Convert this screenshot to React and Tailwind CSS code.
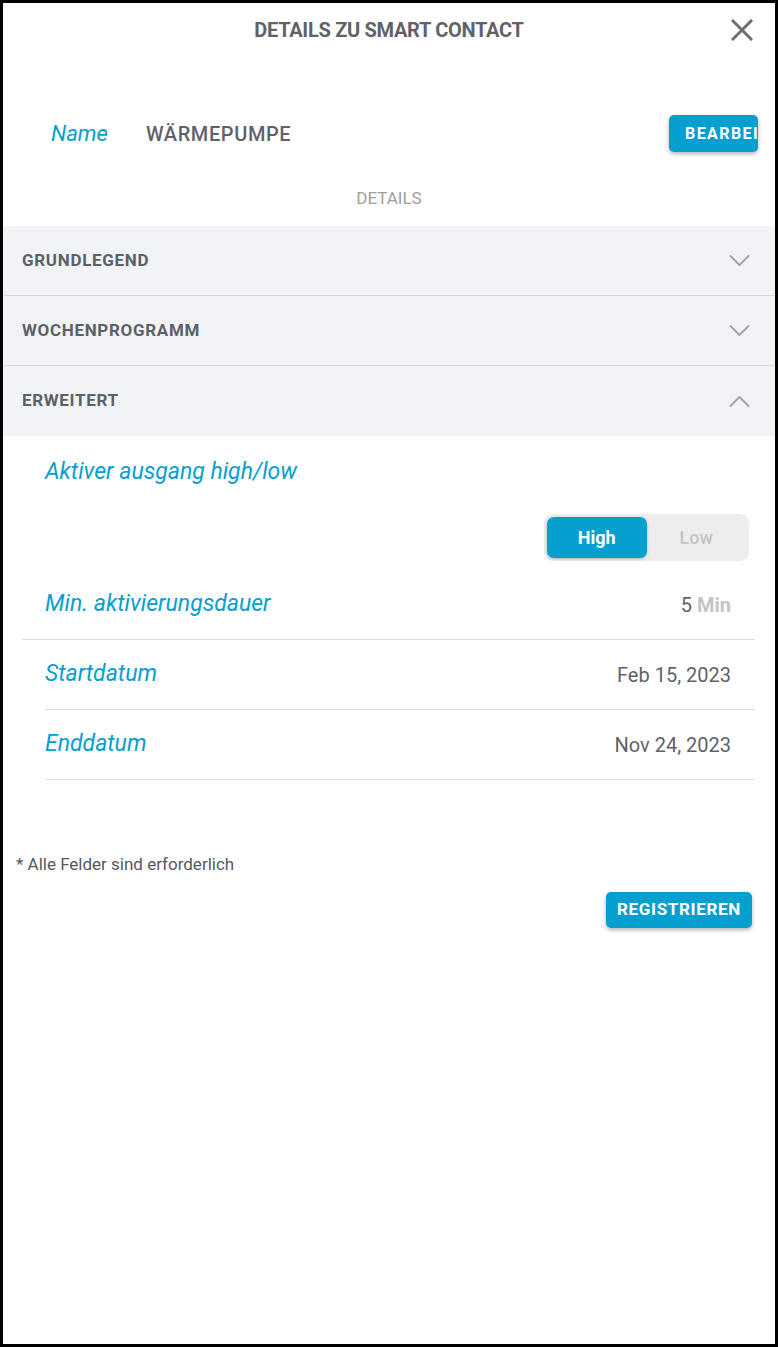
import { useState } from 'react'

function Chevron({ up }) {
  return (
    <svg width="21" height="12" viewBox="0 0 21 12" fill="none" className="text-[#a0a2a5]">
      <path
        d={up ? 'M1.5 11 L10.5 2 L19.5 11' : 'M1.5 1 L10.5 10 L19.5 1'}
        stroke="currentColor"
        strokeWidth="1.8"
        strokeLinecap="round"
        strokeLinejoin="round"
      />
    </svg>
  )
}

function AccordionRow({ title, open, last }) {
  return (
    <div
      className={`flex h-[70px] items-center justify-between bg-[#f2f3f6] pl-[19px] pr-[25px] ${
        last ? '' : 'border-b border-[#d6d8db]'
      }`}
    >
      <span className="text-[17px] font-bold uppercase tracking-[0.04em] text-[#5c6166]">{title}</span>
      <Chevron up={open} />
    </div>
  )
}

function FieldRow({ label, children, first }) {
  return (
    <div
      className={`flex h-[70px] items-center justify-between border-b border-[#dcdcdc] pr-[24px] ${
        first ? 'pl-[23px]' : 'ml-[23px]'
      }`}
    >
      <span className="text-[23px] italic text-[#05a0cf]">{label}</span>
      <span className="text-[20px] text-[#5f6368]">{children}</span>
    </div>
  )
}

export default function App() {
  const [level, setLevel] = useState('high')

  return (
    <div className="box-border h-[1347px] w-[778px] border-[3px] border-black bg-white font-['Roboto',sans-serif]">
      <header className="relative flex h-[54px] items-center justify-center">
        <h1 className="text-[20px] font-bold uppercase tracking-[-0.015em] text-[#5f6368]">
          Details zu Smart Contact
        </h1>
        <button className="absolute right-[22px] top-[16px] text-[#6d7074]" aria-label="Schließen">
          <svg width="22" height="22" viewBox="0 0 22 22">
            <path d="M2 2 L20 20 M20 2 L2 20" stroke="currentColor" strokeWidth="3" strokeLinecap="square" />
          </svg>
        </button>
      </header>

      <div className="mt-[58px] flex h-[37px] items-center pl-[48px] pr-[17px]">
        <span className="w-[95px] text-[22px] italic text-[#05a0cf]">Name</span>
        <span className="text-[20px] font-medium uppercase tracking-[0.03em] text-[#5f6368]">Wärmepumpe</span>
        <button className="ml-auto h-[37px] w-[89px] overflow-hidden whitespace-nowrap rounded-[5px] bg-[#05a0cf] pl-[16px] text-left text-[16px] font-bold uppercase tracking-[0.09em] text-white shadow-[0_2px_4px_rgba(0,0,0,0.3)]">
          Bearbeiten
        </button>
      </div>

      <p className="mt-[35px] text-center text-[17px] uppercase leading-[22px] text-[#9e9e9e]">Details</p>

      <div className="mt-[17px]">
        <AccordionRow title="Grundlegend" />
        <AccordionRow title="Wochenprogramm" />
        <AccordionRow title="Erweitert" open last />
      </div>

      <p className="mt-[21px] pl-[42px] text-[23px] italic leading-[30px] text-[#05a0cf]">Aktiver ausgang high/low</p>

      <div className="mt-[27px] flex justify-end pr-[26px]">
        <div className="flex h-[47px] w-[205px] rounded-[9px] bg-[#ededed] p-[3px]">
          <button
            onClick={() => setLevel('high')}
            className={`flex-1 rounded-[7px] text-[18px] font-bold ${
              level === 'high' ? 'bg-[#05a0cf] text-white shadow-[0_1px_3px_rgba(0,0,0,0.25)]' : 'text-[#c4c4c4]'
            }`}
          >
            High
          </button>
          <button
            onClick={() => setLevel('low')}
            className={`flex-1 rounded-[7px] text-[18px] font-medium ${
              level === 'low' ? 'bg-[#05a0cf] text-white shadow-[0_1px_3px_rgba(0,0,0,0.25)]' : 'text-[#c4c4c4]'
            }`}
          >
            Low
          </button>
        </div>
      </div>

      <div className="ml-[19px] mr-[20px] mt-[9px]">
        <FieldRow label="Min. aktivierungsdauer" first>
          5 <span className="font-bold text-[#c4c4c4]">Min</span>
        </FieldRow>
        <FieldRow label="Startdatum">Feb 15, 2023</FieldRow>
        <FieldRow label="Enddatum">Nov 24, 2023</FieldRow>
      </div>

      <p className="mt-[73px] pl-[13px] text-[17px] leading-[22px] text-[#55595d]">* Alle Felder sind erforderlich</p>

      <div className="mt-[17px] flex justify-end pr-[23px]">
        <button className="h-[36px] rounded-[5px] bg-[#05a0cf] px-[11px] text-[17px] font-bold uppercase tracking-[0.04em] text-white shadow-[0_2px_4px_rgba(0,0,0,0.3)]">
          Registrieren
        </button>
      </div>
    </div>
  )
}
